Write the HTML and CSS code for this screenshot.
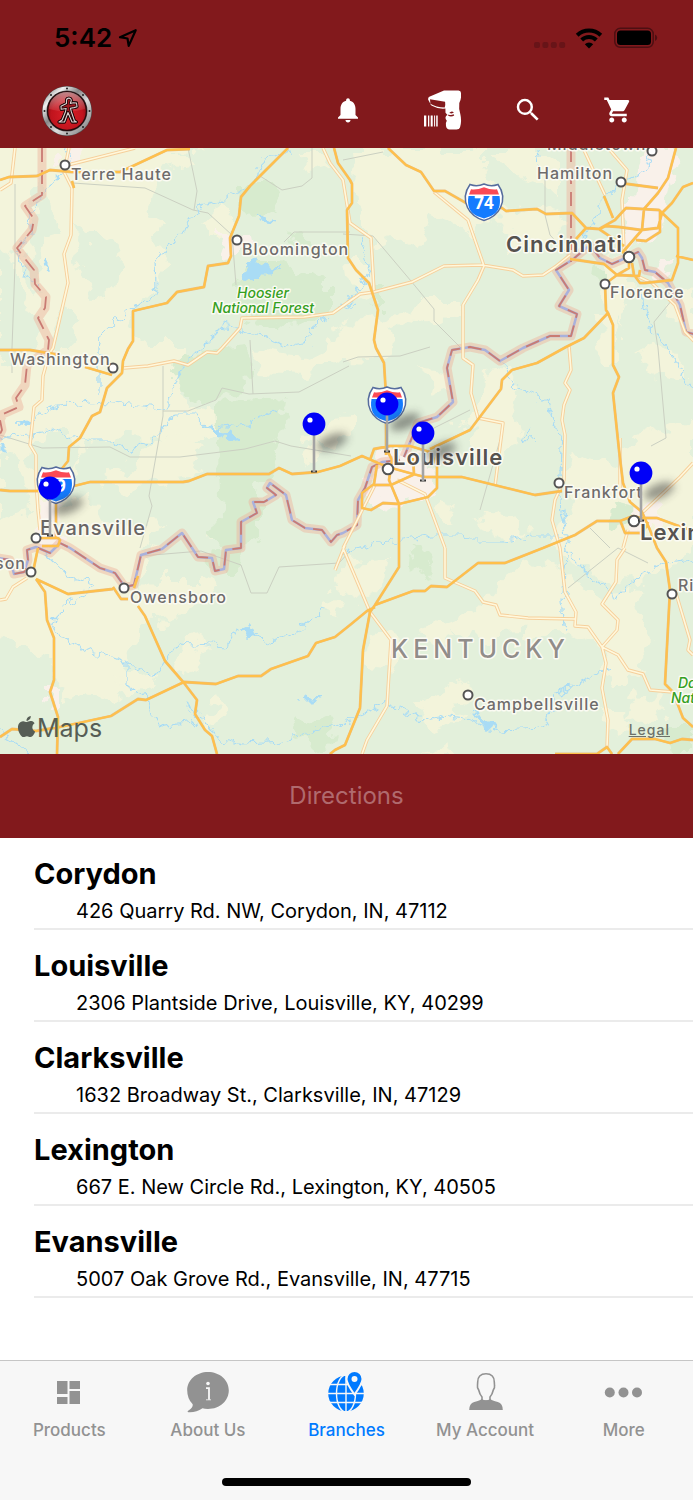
FILE: index.html
```html
<!DOCTYPE html>
<html lang="en">
<head>
<meta charset="utf-8">
<meta name="viewport" content="width=device-width, initial-scale=1">
<title>Branches</title>
<link rel="stylesheet" href="styles.css">
</head>
<body>
<div class="app">
  <header class="header">
    <div class="status">
      <span class="time">5:42</span>
      <svg class="location" width="20" height="20" viewBox="0 0 20 20" aria-hidden="true"><path d="M17.7 2.2 2 9.2l7.5 1.3 1.2 7.4z" fill="none" stroke="#000" stroke-width="2.2" stroke-linejoin="round"/></svg>
      <svg class="signal" width="32" height="22" viewBox="0 0 32 22" aria-hidden="true"><g fill="#681418"><rect x="0" y="15" width="6" height="6" rx="2"/><rect x="8.400" y="15" width="6" height="6" rx="2"/><rect x="16.800" y="15" width="6" height="6" rx="2"/><rect x="25.200" y="15" width="6" height="6" rx="2"/></g></svg>
      <svg class="wifi" width="28" height="22" viewBox="0 0 28 22" aria-hidden="true"><g fill="none" stroke="#000" stroke-width="4"><path d="M2.200 8.300a17 17 0 0 1 23.600 0"/><path d="M6.700 13a10.500 10.500 0 0 1 14.600 0"/></g><path d="M14 21.500 9.800 17.300a6 6 0 0 1 8.400 0z"/></svg>
      <svg class="battery" width="44" height="22" viewBox="0 0 44 22" aria-hidden="true"><rect x=".8" y="1.300" width="38.400" height="19" rx="5.500" fill="none" stroke="#4d0f12" stroke-width="1.500"/><rect x="3" y="3.600" width="34" height="14.400" rx="3.500"/><path d="M41 7.500q2.200 1 2.200 3.300T41 14z" fill="#4d0f12"/></svg>
    </div>
    <nav class="toolbar" aria-label="Main actions">
      <svg class="logo" width="50" height="50" viewBox="0 0 50 50" role="img" aria-label="Company logo">
        <defs>
          <linearGradient id="rim" x1="0" y1="0" x2="1" y2="1"><stop offset="0" stop-color="#777"/><stop offset=".2" stop-color="#eee"/><stop offset=".4" stop-color="#888"/><stop offset=".6" stop-color="#ddd"/><stop offset="1" stop-color="#777"/></linearGradient>
          <radialGradient id="disc" cx=".5" cy=".6" r=".6"><stop offset="0" stop-color="#dc1f28"/><stop offset=".7" stop-color="#c0141d"/><stop offset="1" stop-color="#7e0c12"/></radialGradient>
          <linearGradient id="gloss" x1="0" y1="0" x2="0" y2="1"><stop offset="0" stop-color="#fff" stop-opacity=".5"/><stop offset="1" stop-color="#fff" stop-opacity=".06"/></linearGradient>
        </defs>
        <circle cx="25" cy="25" r="25" fill="#4f4b4b"/><circle cx="25" cy="25" r="22.500" fill="none" stroke="url(#rim)" stroke-width="4"/>
        <circle cx="25" cy="25" r="20" fill="#25090b"/><circle cx="25" cy="25" r="18.800" fill="url(#disc)"/>
        <path d="M7 23a18 17 0 0 1 36 0q-18 5-36 0z" fill="url(#gloss)"/>
        <g fill="#222"><circle cx="25" cy="2.500" r="1"/><circle cx="25" cy="47.500" r="1"/><circle cx="2.500" cy="25" r="1"/><circle cx="47.500" cy="25" r="1"/><circle cx="9" cy="9" r="1"/><circle cx="41" cy="9" r="1"/><circle cx="9" cy="41" r="1"/><circle cx="41" cy="41" r="1"/></g>
        <g stroke-linejoin="round" stroke-linecap="round">
          <path id="figure" d="M24.500 17.500v-3a2.400 2.400 0 0 1 4.800 0l-1 3 3-.8 3.200.3.500 3.800-3 .8-3.600.6 1 3.800 3 8.700 2 1.300h-4.400l-4-9.500-3.500 9.500h-5.500l3.200-2 3.200-8 .8-3.500-5 .8-.2-3z" fill="#a01820" stroke="#1a0506" stroke-width="2.800"/>
          <use href="#figure" class="logo-figure"/>
          <path d="M24.500 17.500v-3a2.400 2.400 0 0 1 4.800 0l-1 3 3-.8 3.200.3.500 3.800-3 .8-3.600.6 1 3.800 3 8.700 2 1.300h-4.400l-4-9.500-3.500 9.500h-5.500l3.200-2 3.200-8 .8-3.500-5 .8-.2-3z" fill="none" stroke="#ddd0d0" stroke-width="1.100"/>
        </g>
      </svg>
      <div class="actions">
        <button type="button" aria-label="Notifications"><svg width="30" height="30" viewBox="0 0 24 24"><path d="M12 22c1.100 0 2-.9 2-2h-4c0 1.100.89 2 2 2zm6-6v-5c0-3.070-1.640-5.640-4.500-6.320V4c0-.83-.67-1.500-1.500-1.500s-1.500.67-1.500 1.500v.68C7.630 5.360 6 7.920 6 11v5l-2 2v1h16v-1l-2-2z"/></svg></button>
        <button type="button" aria-label="Scan barcode"><svg width="48" height="40" viewBox="0 0 48 40"><path fill-rule="evenodd" d="M30 .6h14.500q2.500.2 2.500 2.500v4.500q-.3 3-1.700 5.500-.7 6 1 11 1.700 7-.3 13.500-.6 1.900-3.500 1.900h-7q-3-.3-3.500-3.500-.5-3.500.8-5.200-1.600-1.600-1.300-3.500.5-1.800 2-2.300l-2-2.200-.1-4.300q-7 .8-13.500-2.800-1.200-.5-1.700-2.200L14.100 9.400q-.2-1.700 1.200-2.600zM16 9.300l.4 4.500q5.500 3.700 14.300 3.700.9-3 .4-5.800zM35.200 23l2.500.4 2.200-1q-2.300-2.200-4.700.6zM34 25.600q3.200 2 6.200-.2l-.5-1.200q-3 1.500-5.200.2z"/><path d="M10 25.500h2.300v11H10zm4 0h1.300v11H14zm2.700 0h2v11h-2zm3.400 0h1v11h-1zm2.100 0h1.500v11h-1.500z"/></svg></button>
        <button type="button" aria-label="Search"><svg width="30" height="30" viewBox="0 0 24 24"><path d="M15.500 14h-.79l-.28-.27A6.471 6.471 0 0 0 16 9.500 6.500 6.500 0 1 0 9.500 16c1.610 0 3.090-.59 4.230-1.570l.27.28v.79l5 4.990L20.490 19l-4.990-5zm-6 0C7.010 14 5 11.990 5 9.500S7.010 5 9.500 5 14 7.010 14 9.500 11.990 14 9.500 14z"/></svg></button>
        <button type="button" aria-label="Cart"><svg width="30" height="30" viewBox="0 0 24 24"><path d="M7 18c-1.100 0-1.990.9-1.990 2S5.900 22 7 22s2-.9 2-2-.9-2-2-2zM1 2v2h2l3.600 7.590-1.350 2.450c-.16.28-.25.61-.25.960 0 1.100.9 2 2 2h12v-2H7.420c-.14 0-.25-.11-.25-.25l.03-.12.9-1.630h7.450c.75 0 1.410-.41 1.750-1.030l3.580-6.490A1 1 0 0 0 20 4H5.210l-.94-2H1zm16 16c-1.100 0-1.990.9-1.990 2s.89 2 1.990 2 2-.9 2-2-.9-2-2-2z"/></svg></button>
      </div>
    </nav>
  </header>

  <main class="content">
    <section class="map" aria-label="Map of branches">
      <svg class="map-canvas" viewBox="0 148 693 606">
        <defs>
          <filter id="rough" x="-5%" y="-5%" width="110%" height="110%"><feTurbulence type="fractalNoise" baseFrequency=".05" numOctaves="3" seed="4"/><feDisplacementMap in="SourceGraphic" scale="32" xChannelSelector="R" yChannelSelector="G"/></filter>
          <filter id="wiggle" x="-5%" y="-5%" width="110%" height="110%"><feTurbulence type="fractalNoise" baseFrequency=".11" numOctaves="2" seed="9"/><feDisplacementMap in="SourceGraphic" scale="15" xChannelSelector="R" yChannelSelector="G"/></filter>
          <filter id="blur" x="-50%" y="-80%" width="200%" height="260%"><feGaussianBlur stdDeviation="4"/></filter>
          <g id="shield">
            <path d="M-14-17.500q7 2.500 14-.5 7 3 14 .5 8 11 2.500 23Q12 15 0 18.500-12 15-16.500 5.500-22-6.500-14-17.500z" fill="#fff" stroke="#566c9d" stroke-width="1.500"/>
            <path d="M-13-12.800q6 .8 13-2 7 2.800 13 2l2 5.300h-30z" fill="#fb4a55"/>
            <path d="M-15.500-6h31q2.500 15-8.500 20L0 16.500-7 14Q-18 9-15.500-6z" fill="#147bff"/>
          </g>
          <g id="pin">
            <ellipse cx="18" cy="18" rx="16" ry="7" transform="rotate(-22 18 18)" fill="#333" opacity=".5" filter="url(#blur)"/>
            <path d="M-3 47.500h6" stroke="#333" stroke-width="2"/>
            <path d="M0 10v38" stroke="#a3a3a3" stroke-width="2.600"/>
            <circle r="11.400" fill="#0000f8"/><circle cx="-4" cy="-4" r="2.600" fill="#fff"/>
          </g>
        </defs>
        <rect x="0" y="148" width="693" height="606" fill="#f3f4db"/>
        <g filter="url(#rough)">
          <path fill="#e3f0db" d="M160 165 150 200l12 25-14 10 16 20-8 35-22 20-8 22 25 12h32l-5 42 15 20 42 12-34 23-98-4-22 10-22 60 34-14 10 36 60-6-18 28-6 38 18 30-36 40 34 20-32 22-42-12-16 10-20-40-20-14-60-16v160h760V120H230zM78 228l14 8 10 0 20 14-6 40-12 10-12-10-6-14-10-14zM40 170l8 30 8 30-14 20-4 40-10-10 6-60zM0 250l20 10 0 30 20 30-10 30-30 10zM50 430l20 0 10 40-30 10-20-20zM0 450l20 10 10 50-30 10zM60 310l20 10-10 30-20 0z"/>
          <g fill="#f3f4db">
            <path d="M352 148h128l0 24 16 12 0 20 40 5 22-8 5 50-50-4-10-26-20-2-16 20-12-14-22-10-10 34-26-10-20 8-14-20-10-50z"/>
            <path d="M200 225l20-18 12 8 0 20-20 6zM150 155h44l6 10-50 10zM300 152l26 0 10 14-24 6z"/>
            <path d="M338 330l24-12 22 4 16-14 16 6-26 16 4 20-28 10-42-2zM350 260l16 0 8 30-20 10zM420 300h36l6 8-20 16-34-4z"/>
            <path d="M252 352l50 6 46-22 12 8-24 22-34 8-44-2zM165 440l20-12 14 24-10 26-24 4-50 8-12-10zM240 446l14-10 20 8-10 14zM330 420l24-4 0 16-26 12-16 0z"/>
            <path d="M490 150h50l20 14v30l-20-10-32-10zM610 250l18 12 4 30-12 30-16-10zM664 300l29-6v36l-20-10z"/>
            <path d="M484 370l20-2 12 24-6 20 10 24-16 26-28-10-8-18 14-22zM596 310h14l8 24 0 30-16 0zM638 354l30-6 20 22v10l-36-6z"/>
            <path d="M560 476l20-22 34 10 24-28 26-12 30-6v140l-32 6-26 20-40-4-22-22-24-16 20-30zM480 606l20-24 26-20 34 6 32 30 44-6 16 50-22 42-18 0-10-36-40-16-40 4-50 2-28-16z"/>
            <path d="M380 560l14 0-4 24-30 14-30-16 26-20zM430 620l20 2 12 14-22 10-16-6z"/>
            <path d="M130 610l30-30 50 0 8 16-30 20-48 6zM170 656l30-20 6 14-20 30zM0 560l140 30 24 20-34 12 0 30-16 30 8 14-40-6-30-30-52-26z"/>
            <path d="M380 630l10 0 14 14-14 30-16-2-10-18zM438 690l24-12 10 14-14 14 16 12-40 12-10-14-6-14zM600 710h24l4 30-22-10zM636 698l20-6 10 16-16 20-24-10zM200 716l20-20 6 14-16 20zM420 750l24-6 20 8zM330 600l10 2-4 14-10-2z"/>
            <path d="M420 370l30 4 4 20-20-6zM460 420l14-6 14 8-14 12zM300 440l14-2 8 14-10 14zM226 520l14-6-4 18-24 6zM480 510l34 4 14 20-20 6-30-16zM440 500l16 6-6 14-12-6z"/>
          </g>
          <g fill="#d7ebce">
            <path d="M258 262l22 0 16 14 30-4 0 36-20 16-60-4-12-34zM242 186l28 0 8 26-24 4-16-12zM180 356l66-8 2 40-46 14-24-14zM216 402l60-4 10 24-14 26-12 40 0 50-24 30-26 0 10-70zM292 236l12-4 8 14-14 6zM376 290l10 0 0 18-14 0zM594 260l14 4 0 18-16-4zM618 504l16 4 0 14-20 4zM290 716l22 8 20-10 6 24-24 10-22-16zM410 548l10 6 14 14-6 8-20-12zM660 732l33 0v22h-28z"/>
          </g>
          <path fill="#f9f1ea" d="M646 150h36l-10 40-8 34-26 20-18 20 8-30 8-60zM376 452l30 0 28 14 2 30-40 10-28-6 0-24zM40 500l18 0 6 46-26 4zM60 150l24 0-4 16-20 0zM218 230l26 0 4 20-22 4zM634 506l30-2 0 26-34 4zM44 690l14 4 0 14-14-4zM660 260l14 0-6 20-18-2z"/>
        </g>
        <g class="county">
          <path d="M15 184v80l-3 84v25M73 183l72 5 48 22 15 3 24 22 4 50M188 148l9 43-3 19M260 176l22 14 20-4 10-8V148M284 242l10-10 56 0M343 362l15-5 42-1 30-9M0 435l42 13 68-1 20 10 50 0 65-8 30-8 16 5 60 10M163 366v50l-14 80 3 10-12 42M163 411h25l28-11 6-12 27 6 50-2 50-26M250 340l3 54M343 234l30 2 38 45 23 28v12l30 30M672 300l-18 22 4 26 8 90-15 8M545 175v40l5 20 15 16M470 410l-40 20M500 440l-20 70M141 556l60-5 40 14 10 28 16 0 12-26 60-4 11-12M568 588l50-40 30 15M590 528l20 20M343 160l40-8"/>
        </g>
        <g class="river" filter="url(#wiggle)">
          <path d="M68 148l-4 25-14 12-10 15-10 15 2 20-16 16 10 24 8 10M292 152l-26 6-14 27-33 17-20 5-18 25-26 30 1 25-7 14-22 10-26 25-2 12v50M354 303l-26 12-18 14-2 14-24 4-22-12-38-10-18 18-8 8-16 16-8 22-8 22-35-6-30-3-42 4-18 8-20 12M0 438l28-4 24-5 30 12 30 0 14 9 26-8 14-20 12-8h16l16 15 36-5 32-15M500 363l16 24 32 15 8 30 6 15-2 55 8 45-6 55 4 30M343 554l30-10 60-9 30 0 10 5 30 0 30-4 28 0M665 348l18 25 14 20M570 552l20 25 28 20 25-25 25-10 28-4M343 722l45-18 14 5 20 12 20-5 28 4 30 10 42-2 14-33 44-24 14-2M45 553l25 24 24 7-24 18-20 20 8 12 24 15 30 8 16 6 28 12 14-22 8-10 50 3 10-17 34 13 30-13 24-20M127 660v27l20 8 4 18 14 14 30-4-12-20 12 8 24 28 24 5 40-2 36-14 34-6M537 150l2 16M650 157l-8 16-25 12-15 16-6 20-14 14M642 290l2 20 8 18 14 20M360 238l10 34-14 20-12 14M0 730l30 24M530 430l-6 6 4 4 8-2"/>
          <path fill="#a9dcf5" stroke-width="1" d="M248 264l6-4 8 6 14 2 4-4-8 10-12 0-8 8-8-2 2-8 6-4zM260 216l8 2 6 4-10-1zM44 264l3-4 0 12-3-4zM204 426l6 3 10-2 4 6 6-2 6 8-10-4-8 2-6-6-8-4zM18 424l8-3-2 6zM0 446l6 4-6 2zM472 712l8 6 10 4 6 8-8-2-10-8zM242 630l8-3 8 5-6 3-8-1zM300 700l6-4 6 1 10-1-10 4-8 0z"/>
        </g>
        <g class="border">
          <path id="b" d="M42 148v47l-17 11 9 13-2 11-15 18 5 7 12 15 1 14 11 13-1 11-7 10 11 22-1 10-21 15-2 20-9 13 3 9-16 7-3 6 2 10-5 10M571 148v114M697 335l-11-3-6-27-12-22-13-11-10-2-3-12-4-6-10 5-16 7-12-6-10-13-18 15-16 10 13 20-10 16 18 8-6 22h-21l-27 12-23 13-15-11-15-3-18 3-5 18 6 34-16 15-19 6-14 34M400 460l-18 2-10 5-7 21-7 12-1 25-14 8-6 2-6 7-9-12-17-2-13-8-6-25-16-12-3 5 9 7-12 7h-11l4 11-16 9v26l-15 2-2 19-9 2-3-13-14-1-16-24-20 16-21 6-7 30-9 2-10-14-15-5-30-20-10-5-10 10-14-6-9 3 1 10-4 12-10 2-4-14-12-2"/>
          <path class="border-river" d="M697 335l-11-3-6-27-12-22-13-11-10-2-3-12-4-6-10 5-16 7-12-6-10-13-18 15-16 10 13 20-10 16 18 8-6 22h-21l-27 12-23 13-15-11-15-3-18 3-5 18 6 34-16 15-19 6-14 34M400 460l-18 2-10 5-7 21-7 12-1 25-14 8-6 2-6 7-9-12-17-2-13-8-6-25-16-12-3 5 9 7-12 7h-11l4 11-16 9v26l-15 2-2 19-9 2-3-13-14-1-16-24-20 16-21 6-7 30-9 2-10-14-15-5-30-20-10-5-10 10-14-6-9 3 1 10-4 12-10 2-4-14-12-2"/>
          <path class="border-dash" d="M42 148v47l-17 11 9 13-2 11-15 18 5 7 12 15 1 14 11 13-1 11-7 10 11 22-1 10-21 15-2 20-9 13 3 9-16 7-3 6 2 10-5 10M571 148v114M697 335l-11-3-6-27-12-22-13-11-10-2-3-12-4-6-10 5-16 7-12-6-10-13-18 15-16 10 13 20-10 16 18 8-6 22h-21l-27 12-23 13-15-11-15-3-18 3-5 18 6 34-16 15-19 6-14 34M400 460l-18 2-10 5-7 21-7 12-1 25-14 8-6 2-6 7-9-12-17-2-13-8-6-25-16-12-3 5 9 7-12 7h-11l4 11-16 9v26l-15 2-2 19-9 2-3-13-14-1-16-24-20 16-21 6-7 30-9 2-10-14-15-5-30-20-10-5-10 10-14-6-9 3 1 10-4 12-10 2-4-14-12-2"/>
        </g>
        <g class="minor">
          <path id="m" d="M15 148l-4 35-11 7M69 148l-5 24 8 16-1 47-7 19 4 29-15 65-4 6-6 22-1 24-8 7-4 38 6 10v25l2 30 2 20M135 148l-75 19M354 298l-21 15-29 4-62 1-2 10-18 20-5 5-10-1-19 13-14-4-26 5-24 2M323 148l7 15 13 17 7 43 21 15 3 52M343 306l17-12 14-2 38-10 32-16 38-1 31 5 10 6 20-1 12-8 15-12M434 192l34 28 16 46-6 14-15 25v53l10 7-2 28 7 25 25 5-8 63M583 148l22 47M608 148l19 22-5 30 2 50 9 8M637 276l15 7 23 22 10 27 10 10M569 346l2 24-6 13 5 7-6 15-2 15 3 15-1 45-9 20-3 20 8 28 5 44 11 20-1 14 13 1 14 20 16 8 10 15 15 4 7 16 23 2M602 647l4 16-4 25 6 32-1 27M602 647l15-17 1-10-16-16 14-22 1-22 8-12M445 548v30l30 13 8 11 13 3 4 10 28 3 47 1M343 548l27 64 21 28-4 66-20 34-5 14M375 485l-32 63M397 480l28 14 20 54M693 463l-13 14-37 35M620 438v55M345 545l-10 25M0 600l6-1 7-12 14-9M675 590l15 50-2 10 5 5M628 530l-5 18"/>
          <use href="#m" class="minor-fill"/>
        </g>
        <g class="major">
          <path id="r" d="M0 180l9-3 28-1 13-6 22 2h48l15-7 32-15 23-1M74 188l-2-7M288 148l-38 38-9 11-2 19-9 22 1 18-3 7-20 3-4 21-27 5-10 11-17 4-17 4v30l-5 8-5 12-1 12-15 15-7 24-8 4-12 22-11 9-1 14-8 10-4 14v54M334 148l4 15 12 17 2 4v19l-5 7 1 48 8 12 13 13 9 27-4 30 2 8 8 15 2 32v60M388 148l18 17 15 7 13 19h11l21 12 36 5 4 3 31-2 9 5 26-1 14 15 13 1 16-9 11-12 33 2 19 18v35l-6 17-27 3-5 0-6-8-2-12M676 148l-8 30-10 15-14 16-2 21-20 23M620 183l38 5M693 183l-10 4-11 16-10 10-4 15-17 2-22-3-13-1-7 3M604 196l9 22M599 229l25 17M660 211v21l-14 9-10-1M576 239l10-11M676 256l17 4M629 262v6l-12 7-12 9 1 26 2 3 5 12v40l6 12-6 16 6 57 4 33 7 19 12 10 8 18 7 18 9 14 4 28-5 94 8 8 10 26 10 9M608 313l-24 25-18 9-29 16-25 7-10 10-1 9-31 41-40 19M570 259l34 5 13 11 22 1 1-6M0 490l10 1h28M74 486l16-4h72l21 0 6-1 18-7h62l10-6 13 6 26-2 22-6 22-10 16 7 10 4 25 7 12 3h37l73 18 27-4M543 548l32-13 22-14h23l13-5 9 2h15l19 7 17 6M620 520l5 13h18l5-11M370 460l4-11 16-3h20l20 6 7 13v23l-9 9-29 7-16-1-12 7-9-2v-15l12-9 3-19M374 485h17l24-11M387 450l5 10-3 20 10 24v63l-24 38-5 7-7 38-3 58-15 37-10 5-5 4M413 458l1 16M543 548l-38 15h-27l-31 24-16-1-6 5h-12l-38 14M375 607l-8 4-17 14-15 12-19 6-8 13-37 13-10 7h-23l-22 8-32-2-38 18-8-1-27 17-51 11-24 4-24-2-12 8M38 548l-5 24M36 579l9 13 2 28 7 18v42l-4 12 8 25-1 37M36 579l32 15 45-5M113 587l8 12h7M138 606l7 10 20 45 19 22 13 17-2 14 10 16 7 6 5 18M138 576l-4 12M555 754h42l10-7 5 7M618 754l14-15h23l15 4 12-4 11 1M40 538h18l2 2-2 6H42M0 350h30l30 5M85 367l27 8"/>
          <use href="#r" class="major-fill"/>
        </g>

        <use href="#shield" x="484" y="202"/><use href="#shield" x="387" y="405"/><use href="#shield" x="56" y="485"/>
        <g class="shield-text"><text x="484" y="209">74</text><text x="387" y="412">65</text><text x="56" y="492">69</text></g>

        <g class="dots">
          <circle cx="65" cy="165" r="4.500"/><circle cx="237" cy="240" r="4.500"/><circle cx="621" cy="182" r="4.500"/><circle cx="605" cy="284" r="4.500"/><circle cx="113" cy="368" r="4.500"/><circle cx="36" cy="538" r="4.500"/><circle cx="559" cy="483" r="4.500"/><circle cx="31" cy="572" r="4.500"/><circle cx="124" cy="588" r="4.500"/><circle cx="468" cy="695" r="4.500"/><circle cx="672" cy="594" r="4.500"/>
          <circle cx="629" cy="257" r="5.300"/><circle cx="388" cy="469" r="5.300"/><circle cx="634" cy="521" r="5.300"/>
        </g>
        <g class="town">
          <text x="71" y="180">Terre Haute</text><text x="242" y="255">Bloomington</text><text x="537" y="179">Hamilton</text><text x="547" y="150">Middletown</text><text x="610" y="298">Florence</text><text x="10" y="365">Washington</text><text x="564" y="498">Frankfort</text><text x="130" y="603">Owensboro</text><text x="474" y="710">Campbellsville</text><text x="678" y="591">Richmond</text><text x="26" y="569" text-anchor="end">Henderson</text>
        </g>
        <g class="dots"><circle cx="652" cy="151" r="4.500"/></g>
        <g class="city"><text x="40" y="535" class="mid">Evansville</text><text x="506" y="252">Cincinnati</text><text x="393" y="465">Louisville</text><text x="640" y="540">Lexington</text></g>
        <text class="state" x="391" y="658">KENTUCKY</text>
        <g class="forest"><text x="263" y="298" text-anchor="middle">Hoosier</text><text x="263" y="313" text-anchor="middle">National Forest</text><text x="678" y="688">Daniel Boone</text><text x="671" y="703">National Forest</text></g>

        <use href="#pin" x="387" y="404"/><use href="#pin" x="314" y="424"/><use href="#pin" x="423" y="433"/><use href="#pin" x="641" y="473"/><use href="#pin" x="50" y="488"/>

        <g fill="#565d55"><path transform="translate(16 716) scale(.88)" d="M12.152 6.896c-.948 0-2.415-1.078-3.960-1.040-2.040.027-3.910 1.183-4.961 3.014-2.117 3.675-.546 9.103 1.519 12.090 1.013 1.454 2.208 3.090 3.792 3.039 1.520-.065 2.090-.987 3.935-.987 1.831 0 2.350.987 3.960.948 1.637-.026 2.676-1.480 3.676-2.948 1.156-1.688 1.636-3.325 1.662-3.415-.039-.013-3.182-1.221-3.220-4.857-.026-3.040 2.480-4.494 2.597-4.559-1.429-2.090-3.623-2.324-4.390-2.376-2-.156-3.675 1.090-4.610 1.090zM15.530 3.830c.843-1.012 1.400-2.427 1.245-3.830-1.207.052-2.662.805-3.532 1.818-.780.896-1.454 2.338-1.273 3.714 1.338.104 2.715-.688 3.559-1.701"/><text class="brand" x="37" y="737">Maps</text></g>
      </svg>
      <a class="legal" href="#legal">Legal</a>
    </section>

    <button class="directions" type="button" disabled>Directions</button>

    <ul class="branches">
      <li><h2>Corydon</h2><p>426 Quarry Rd. NW, Corydon, IN, 47112</p></li>
      <li><h2>Louisville</h2><p>2306 Plantside Drive, Louisville, KY, 40299</p></li>
      <li><h2>Clarksville</h2><p>1632 Broadway St., Clarksville, IN, 47129</p></li>
      <li><h2>Lexington</h2><p>667 E. New Circle Rd., Lexington, KY, 40505</p></li>
      <li><h2>Evansville</h2><p>5007 Oak Grove Rd., Evansville, IN, 47715</p></li>
    </ul>
  </main>

  <footer class="footer">
    <nav class="tabs" aria-label="Sections">
      <a href="#products"><svg width="48" height="48" viewBox="0 0 48 48"><path d="M12 12h10.500v13H12zM24.500 12H35v8H24.500zM12 28h10.500v7H12zM24.500 22H35v13H24.500z"/></svg>Products</a>
      <a href="#about"><svg width="48" height="48" viewBox="0 0 48 48"><path d="M24 3c11.500 0 20.800 7.800 20.800 18.300S36 40 24 40q-3.500 0-5.500-.7Q12 43.800 4.500 43.300q-1.800-.6 0-1.800 4.700-2.700 4.200-6.200Q3.200 30 3.200 21.300C3.200 10.800 12.500 3 24 3z"/><circle cx="24" cy="14.500" r="1.800" fill="#f7f7f7"/><path d="M22 19.200h3v11.600" fill="none" stroke="#f7f7f7" stroke-width="1.800"/><path d="M22 30.800h5" stroke="#f7f7f7" stroke-width=".8"/></svg>About Us</a>
      <a href="#branches" class="active" aria-current="page"><svg width="48" height="48" viewBox="0 0 48 48"><circle cx="24" cy="24.500" r="17.800"/><g fill="none" stroke="#f7f7f7" stroke-width="1.400"><path d="M24 5v38M5 24.500h38M8 15.500h32M8 33.500h32"/><ellipse cx="24" cy="24.500" rx="9.500" ry="18.500"/></g><path d="M32.500 25.500q-8-11-8-15.500a8 8 0 0 1 16 0q0 4.500-8 15.500z" stroke="#f7f7f7" stroke-width="2"/><circle cx="32.500" cy="10" r="3" fill="#f7f7f7"/></svg>Branches</a>
      <a href="#account"><svg width="48" height="48" viewBox="0 0 48 48"><path d="M25 4.800c5.500 0 8.500 3 8.300 8.200l.2 3.200q.5 2.200-1.200 4.800-1 4.500-3.300 7v4h-8v-4q-2.300-2.500-3.300-7-1.700-2.600-1.200-4.800l.2-3.200c-.2-5.200 2.800-8.200 8.300-8.200z" fill="none" stroke="currentColor" stroke-width="1.600"/><path d="M8.200 41q0-6.500 5-8 6-1.300 7.500-3 4.300 2.800 8.600 0 1.500 1.700 7.500 3 5 1.500 5 8z"/></svg>My Account</a>
      <a href="#more"><svg width="48" height="48" viewBox="0 0 48 48"><circle cx="9.800" cy="23.500" r="5"/><circle cx="23.500" cy="23.500" r="5"/><circle cx="37" cy="23.500" r="5"/></svg>More</a>
    </nav>
    <div class="home-indicator"></div>
  </footer>
</div>
</body>
</html>
```
FILE: styles.css
```css
* { box-sizing: border-box; }
body {
  margin: 0;
  font-family: Inter, "Liberation Sans", sans-serif;
  color: #000;
  background: #fff;
}
.app { display: flex; flex-direction: column; min-height: 100vh; }

.header { background: #82191c; }
.status {
  display: flex;
  align-items: center;
  height: 74px;
  padding: 2px 35px 0 54px;
}
.time { font-size: 26px; font-weight: 600; line-height: 32px; }
.location { margin-left: 6px; }
.signal { margin-left: auto; }
.wifi { margin-left: 9px; }
.battery { margin-left: 11px; }
.toolbar {
  display: flex;
  align-items: center;
  justify-content: space-between;
  height: 74px;
  padding: 0 30px 0 42px;
}
.logo { display: block; }
.actions { display: grid; grid-template-columns: repeat(4, 90px); }
.actions button {
  display: flex;
  align-items: center;
  justify-content: center;
  height: 48px;
  padding: 0 0 2px;
  border: 0;
  background: none;
  fill: #fff;
}

.content { flex: 1; display: flex; flex-direction: column; }
.map { position: relative; overflow: hidden; }
.map-canvas { display: block; width: 100%; height: auto; }
.county { fill: none; stroke: #cbd0c2; stroke-width: 1; }
.river { fill: none; stroke: #a9dcf5; stroke-width: 1.2; }
.border { fill: none; stroke: #eeb29b; stroke-width: 9; stroke-opacity: .45; stroke-linejoin: round; }
.border-river { stroke: #a9b1dc; stroke-width: 2.5; stroke-opacity: 1; }
.border-dash { stroke: #c97b73; stroke-width: 1.8; stroke-opacity: 1; stroke-dasharray: 14 8; }
.minor { fill: none; stroke: #f6cf9b; stroke-width: 3.4; stroke-linejoin: round; }
.minor-fill { stroke: #fff8dc; stroke-width: 1.6; }
.major { fill: none; stroke: #e9be83; stroke-width: 2.8; stroke-linejoin: round; }
.major-fill { stroke: #ffc04a; stroke-width: 2; }
.shield-text { font-size: 17px; font-weight: 700; fill: #fff; text-anchor: middle; font-family: "Open Sans", sans-serif; }
.dots { fill: #fff; stroke: #545454; stroke-width: 2; }
.town, .city, .state, .forest { paint-order: stroke; stroke: #fbfbf3; stroke-width: 3; stroke-linejoin: round; }
.town { font-size: 16px; font-weight: 500; letter-spacing: 1px; fill: #6e6b6b; }
.city { font-size: 22px; font-weight: 600; letter-spacing: 1px; fill: #55524f; }
.mid { font-size: 20px; fill: #696564; font-weight: 500; }
.state { font-size: 25px; font-weight: 500; letter-spacing: 5px; fill: #918d8a; }
.forest { font-size: 14px; font-weight: 500; font-style: italic; fill: #35a022; }
.brand { font-size: 25px; }
.legal {
  position: absolute;
  right: 23px;
  bottom: 14px;
  font-size: 14px;
  line-height: 20px;
  font-weight: 500;
  color: #6d716a;
  letter-spacing: 1px;
}

.directions {
  height: 84px;
  padding: 0;
  border: 0;
  background: #82191c;
  color: #b06a6e;
  font: 400 24px/32px Inter, "Liberation Sans", sans-serif;
}

.branches { margin: 0; padding: 0 0 0 34px; list-style: none; }
.branches li { padding-top: 16px; border-bottom: 2px solid #ebebeb; }
.branches h2 { margin: 0; font-size: 29px; line-height: 40px; font-weight: 700; }
.branches p { margin: 0; padding-left: 42px; font-size: 20px; line-height: 34px; }

.footer { background: #f7f7f7; border-top: 1px solid #c6c6c6; padding: 8px 0 14px; }
.tabs { display: grid; grid-template-columns: repeat(5, 1fr); }
.tabs a {
  display: flex;
  flex-direction: column;
  align-items: center;
  font-size: 17px;
  line-height: 26px;
  font-weight: 500;
  color: #929292;
  fill: currentColor;
  text-decoration: none;
}
.tabs .active { color: #007aff; }
.home-indicator { width: 36%; height: 8px; margin: 35px auto 0; border-radius: 4px; background: #000; }
```
